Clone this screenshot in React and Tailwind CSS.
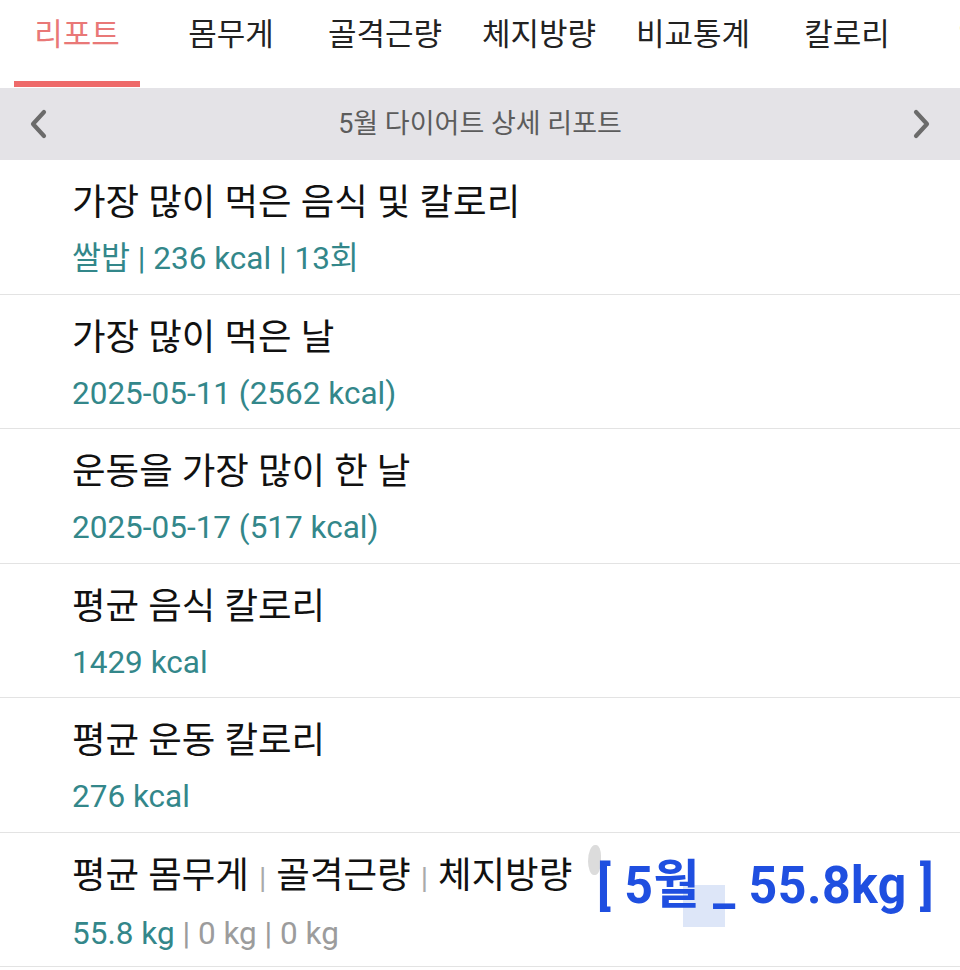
import React from 'react'

const TABS = ['리포트', '몸무게', '골격근량', '체지방량', '비교통계', '칼로리', '영양소']

const ROWS = [
  { title: '가장 많이 먹은 음식 및 칼로리', value: '쌀밥 | 236 kcal | 13회' },
  { title: '가장 많이 먹은 날', value: '2025-05-11 (2562 kcal)' },
  { title: '운동을 가장 많이 한 날', value: '2025-05-17 (517 kcal)' },
  { title: '평균 음식 칼로리', value: '1429 kcal' },
  { title: '평균 운동 칼로리', value: '276 kcal' },
]

function Chevron({ dir }) {
  return (
    <svg width="20" height="30" viewBox="0 0 20 30" fill="none">
      <polyline
        points={dir === 'left' ? '16,3 5,15 16,27' : '4,3 15,15 4,27'}
        stroke="#6b6b6b" strokeWidth="4.2" strokeLinecap="round" strokeLinejoin="round" />
    </svg>
  )
}

function Row({ children }) {
  return (
    <div className="relative h-[134.5px] border-b border-[#e3e3e3] pl-[72px] pt-[21px]">
      {children}
    </div>
  )
}

export default function App() {
  return (
    <div className="w-[960px] h-[970px] overflow-hidden bg-white font-[Roboto,'Noto_Sans_CJK_KR',sans-serif]">
      {/* tabs */}
      <div className="flex h-[88px] overflow-hidden">
        {TABS.map((t, i) => (
          <div key={t} className="flex-none w-[154px] flex flex-col items-center">
            <span className={`mt-[15px] text-[31px] leading-[40px] whitespace-nowrap ${i === 0 ? 'text-[#e97877]' : 'text-[#222]'}`}>{t}</span>
            {i === 0 && <div className="mt-auto mb-[1px] h-[6px] w-[126px] bg-[#ee6a6a]" />}
          </div>
        ))}
      </div>

      {/* month bar */}
      <div className="flex h-[72px] items-center bg-[#e4e3e7] px-[28px]">
        <Chevron dir="left" />
        <div className="flex-1 text-center text-[27px] text-[#5c5c5c]">5월 다이어트 상세 리포트</div>
        <Chevron dir="right" />
      </div>

      {ROWS.map(r => (
        <Row key={r.title}>
          <div className="text-[36.5px] leading-[44px] text-[#111]">{r.title}</div>
          <div className="mt-[14px] text-[31.5px] leading-[40px] text-[#33878a]">{r.value}</div>
        </Row>
      ))}

      <Row>
        <div className="whitespace-nowrap text-[36.5px] leading-[44px] text-[#111]">
          평균 몸무게<span className="px-[10px] text-[30px] text-[#aaa]">|</span>골격근량<span className="px-[10px] text-[30px] text-[#aaa]">|</span>체지방량
        </div>
        <div className="mt-[14px] text-[31.5px] leading-[40px] text-[#9c9c9c]">
          <span className="text-[#33878a]">55.8 kg</span> | 0 kg | 0 kg
        </div>

        {/* pasted annotation overlay */}
        <div className="absolute left-[588px] top-[12px] h-[30px] w-[13px] rounded-[60%_40%_50%_50%] bg-[#dcdcdc]" />
        <div className="absolute left-[683px] top-[52px] h-[42px] w-[42px] bg-[#dde6f8]" />
        <div className="absolute left-[597px] top-[24px] origin-top scale-y-[1.05] whitespace-nowrap text-[50px] font-bold leading-[54px] tracking-[0.5px] text-[#1f4fe0]">
          [ 5월 _ 55.8kg ]
        </div>
      </Row>
    </div>
  )
}
